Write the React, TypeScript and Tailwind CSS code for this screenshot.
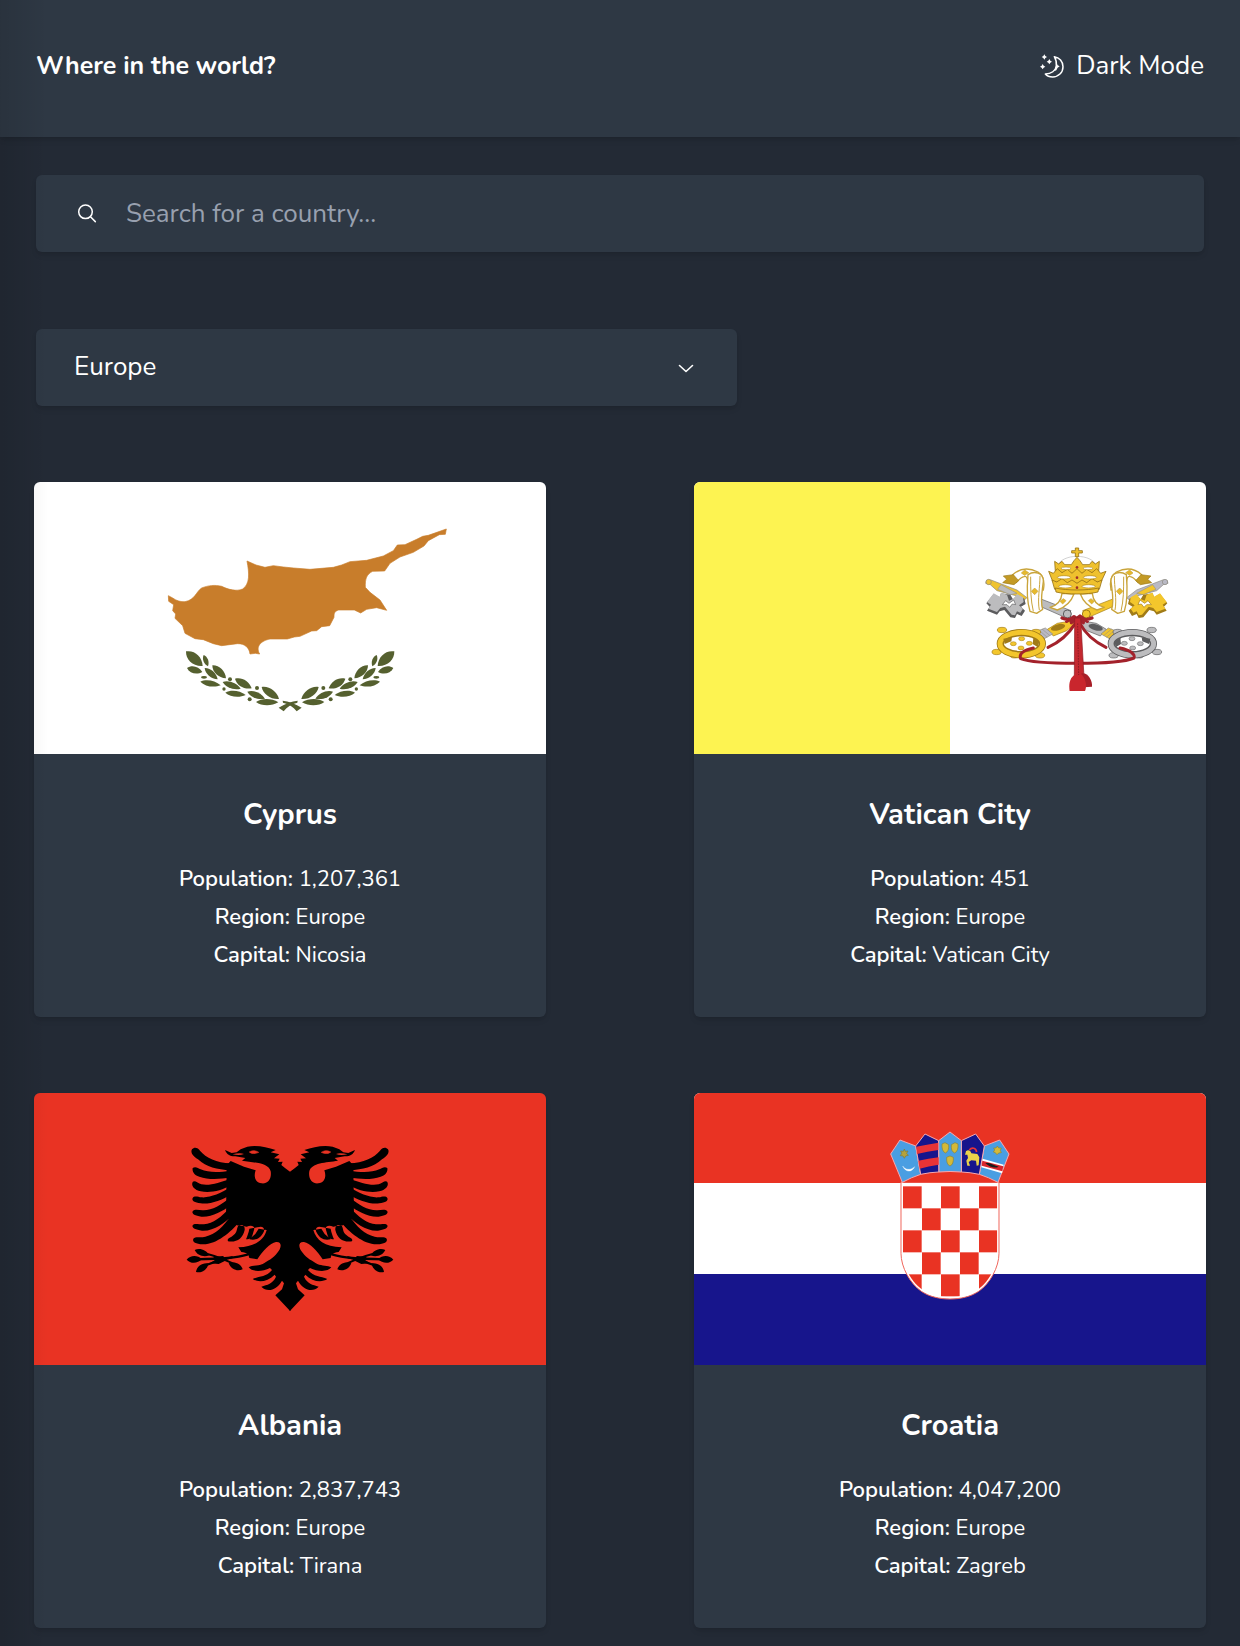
import type { ReactNode } from "react";

type Country = {
  name: string;
  population: string;
  region: string;
  capital: string;
  flag: ReactNode;
};

/* A pointed leaf between two points, w wide in the middle. */
function leaf(x1: number, y1: number, x2: number, y2: number, w: number) {
  const dx = x2 - x1;
  const dy = y2 - y1;
  const len = Math.hypot(dx, dy) || 1;
  const nx = (-dy / len) * w * 0.68;
  const ny = (dx / len) * w * 0.68;
  const ax = x1 + dx * 0.25;
  const ay = y1 + dy * 0.25;
  const bx = x1 + dx * 0.7;
  const by = y1 + dy * 0.7;
  return `M${x1},${y1}C${ax + nx},${ay + ny} ${bx + nx},${by + ny} ${x2},${y2}C${bx - nx},${by - ny} ${ax - nx},${ay - ny} ${x1},${y1}Z`;
}

function Flag({ label, children }: { label: string; children: ReactNode }) {
  return (
    <svg
      role="img"
      aria-label={label}
      viewBox="0 0 512 272"
      preserveAspectRatio="none"
      className="block aspect-[512/272] w-full"
    >
      {children}
    </svg>
  );
}

const oliveLeaves: number[][] = [
  [108, 424, 158, 468, 30],
  [111, 474, 157, 486, 20],
  [161, 435, 174, 469, 14],
  [164, 474, 203, 508, 18],
  [187, 466, 228, 505, 22],
  [151, 515, 212, 526, 17],
  [218, 516, 272, 536, 18],
  [255, 506, 305, 535, 22],
  [226, 548, 287, 555, 17],
  [292, 545, 345, 566, 18],
  [335, 531, 387, 567, 23],
  [318, 576, 385, 577, 18],
];

function OliveBranch() {
  return (
    <>
      {oliveLeaves.map(([a, b, c, d, w], i) => (
        <path key={i} d={leaf(a, b, c, d, w)} />
      ))}
      <ellipse cx="162" cy="502" rx="9" ry="4" />
      <circle cx="240" cy="508" r="6" />
      <circle cx="222" cy="537" r="5" />
      <circle cx="321" cy="534" r="6" />
      <circle cx="299" cy="568" r="6" />
      <path d="M398,572C415,574 438,582 455,593L440,604C430,590 415,582 399,578Z" />
    </>
  );
}

function CyprusFlag() {
  return (
    <Flag label="Flag of Cyprus">
      <rect width="512" height="272" fill="#fff" />
      <g transform="translate(116 28) scale(.33333)">
        <path
          fill="#c87d2b"
          stroke="#c87d2b"
          strokeWidth="2"
          d="M55,257L68,264C80,273 93,276 105,275C135,270 138,245 155,234C175,226 195,224 215,229C235,239 260,245 278,237C300,222 298,190 291,153L318,165L345,172L370,167L400,171L430,174L480,178L550,172L575,165L600,155L650,151L700,138L730,122L742,105L765,104L800,88L818,79L835,76L889,57L886,73L868,74L835,92L822,108L790,127L750,141L720,160L704,183L668,184C650,193 645,206 646,232L660,247L690,270L710,301L680,293L650,298L632,309L613,300L566,300C553,304 552,310 552,322L539,347L515,350L500,362L485,363L450,379L433,381L412,387L360,387C335,392 315,408 329,432L316,430L300,432C298,414 285,400 262,401L215,407L190,401L160,389L135,386L105,370L98,347L75,325L77,312L68,302L71,284L56,274Z"
        />
        <g fill="#55602f">
          <OliveBranch />
          <g transform="translate(841 0) scale(-1 1)">
            <OliveBranch />
          </g>
        </g>
      </g>
    </Flag>
  );
}

/* One key of the crossed pair; wards at the top right, bow at the bottom left. */
function Key({ main, dark, light, accent }: { main: string; dark: string; light: string; accent: string }) {
  return (
    <g strokeLinejoin="round">
      <path d="M338,242L356,262L442,224L436,204Z" fill={main} stroke={dark} strokeWidth="2" />
      <circle cx="349" cy="252" r="12" fill={main} stroke={dark} strokeWidth="3" />
      <path d="M470,203L500,180L578,150L592,152L594,160L580,164L560,182L500,198L478,210Z" fill={accent} stroke="#8d8a80" strokeWidth="2" />
      <path d="M500,190L548,164L558,178L520,194Z" fill={light} stroke="#8d8a80" strokeWidth="1.5" />
      <circle cx="585" cy="156" r="8" fill={accent} stroke="#8d8a80" strokeWidth="2" />
      <path
        d="M478,206L500,196L512,208L520,194L548,190L552,202L570,192L592,220L582,230L590,242L560,254L552,244L538,240L520,262L506,264L500,252L486,258L476,242L488,230L474,222Z"
        fill={dark}
      />
      <path
        d="M482,202L500,192L510,206L524,212L530,194L548,188L552,200L570,190L590,216L578,224L586,236L560,246L550,234L536,230L516,254L506,256L500,244L490,248L482,236L494,226L480,216Z"
        fill={main}
      />
      <path d="M504,224L510,210L524,220L534,212L544,224L530,224L522,232L514,222Z" fill="#fff" stroke={dark} strokeWidth="2" />
      <path d="M308,272L262,280L232,298L250,318L290,302L314,282Z" fill={main} stroke={dark} strokeWidth="2" />
      <ellipse cx="264" cy="292" rx="22" ry="9" fill={dark} transform="rotate(-15 264 292)" />
      <path d="M194,306L226,294L248,312L216,330Z" fill={accent} stroke="#8d8a80" strokeWidth="2" />
      <path d="M206,300L232,322M216,297L240,317" stroke="#8d8a80" strokeWidth="1.5" />
      {[
        [96, 300],
        [80, 366],
        [210, 376],
        [134, 376],
        [198, 306],
      ].map(([x, y]) => (
        <ellipse key={x} cx={x} cy={y} rx="14" ry="8" fill={main} stroke={dark} strokeWidth="2" />
      ))}
      <ellipse cx="154" cy="341" rx="63" ry="33" fill="#fff" stroke={dark} strokeWidth="22" />
      <ellipse cx="154" cy="341" rx="64" ry="34" fill="none" stroke={main} strokeWidth="15" />
      <path d="M100,326L126,322L124,334L104,342ZM190,324L208,334L204,352L188,342Z" fill={dark} />
      {[
        [155, 326],
        [130, 341],
        [153, 354],
        [178, 340],
      ].map(([x, y]) => (
        <ellipse key={x} cx={x} cy={y} rx="9" ry="6" fill={main} stroke={dark} strokeWidth="1.5" />
      ))}
    </g>
  );
}

function Lappet() {
  return (
    <g fill="#fff" stroke="#c9a43a" strokeWidth="4" strokeLinejoin="round">
      <path d="M276,190C274,212 262,226 240,232L262,240C290,230 304,214 312,192Z" />
      <path d="M128,134C150,114 176,112 204,126C222,138 224,160 220,180L174,172C174,150 172,136 162,140C152,142 146,150 138,158Z" />
      <path d="M100,138L130,134L146,152L132,164L98,158L110,148Z" fill="#c39a25" stroke="#9b7a1a" strokeWidth="2" />
      <path d="M174,134C192,122 220,126 220,154C216,190 210,214 218,238L200,250L180,244C172,220 170,180 174,134Z" />
      <path d="M182,140C182,180 182,210 190,244M210,138C210,170 202,210 208,240" fill="none" strokeWidth="3" />
      <path d="M164,120L176,128L164,136L154,129ZM194,174L204,184L194,194L184,184ZM280,206L288,212L278,222L270,214Z" fill="#e6b92c" strokeWidth="2" />
    </g>
  );
}

function VaticanFlag() {
  return (
    <Flag label="Flag of Vatican City">
      <rect width="512" height="272" fill="#fff" />
      <rect width="256" height="272" fill="#fdf351" />
      <g transform="translate(276 48) scale(.33333)">
        <g transform="translate(641 0) scale(-1 1)">
          <Key main="#bcbcbe" dark="#5c5c5e" light="#bcbcbe" accent="#efc330" />
        </g>
        <Key main="#f3c62c" dark="#a17b17" light="#f3c62c" accent="#b9b9c4" />
        <Lappet />
        <g transform="translate(643 0) scale(-1 1)">
          <Lappet />
        </g>
        <g fill="none" stroke="#a3222b" strokeLinecap="round" strokeLinejoin="round">
          <path d="M316,280C296,312 270,336 234,352" strokeWidth="9" />
          <path d="M330,280C346,312 372,334 408,352" strokeWidth="9" />
          <path d="M190,354C160,360 146,372 152,386C180,398 250,400 321,400S464,396 492,384C496,372 480,360 450,354" strokeWidth="9" />
          <path d="M276,264C296,272 340,274 366,264M290,274L312,260L340,278M352,274L330,258L304,278" strokeWidth="10" />
        </g>
        <path d="M314,264H332L342,440H313Z" fill="#c4282f" stroke="#8f1b23" strokeWidth="2" />
        <path d="M323,280L326,436" stroke="#8f1b23" strokeWidth="3" strokeDasharray="5 3" />
        <path d="M334,430C354,426 368,452 366,470L342,472Z" fill="#a81f28" />
        <path d="M312,436L336,434C350,452 350,470 345,483H299C296,466 298,446 312,436Z" fill="#c9262d" />
        <path d="M260,112C272,68 370,68 382,112" fill="#fff" stroke="#bbb" strokeWidth="2" />
        <g fill="#efc12e" stroke="#977216" strokeWidth="2.5" strokeLinejoin="round">
          <path d="M316,54H326V62H337V69H326V80H316V69H305V62H316Z" />
          <path d="M254,94L266,102L276,94L284,104L304,104L312,92L321,82L330,92L338,104L358,104L366,94L376,102L388,94L386,124C350,132 290,132 256,124Z" />
          <path d="M236,124L250,130L262,116L276,128L292,118L306,130L321,116L336,130L350,118L366,128L380,116L392,130L408,124L394,154C350,162 290,162 248,154Z" />
          <path d="M246,150L260,156L276,146L292,158L306,150L321,160L336,150L350,158L366,146L382,156L396,150L388,178C364,188 278,188 254,178Z" />
          <path d="M256,174C290,182 352,182 386,174L384,186C352,194 290,194 258,186Z" />
        </g>
        <g fill="#fff" stroke="#b08b22" strokeWidth="2">
          <ellipse cx="288" cy="115" rx="15" ry="4" />
          <ellipse cx="354" cy="115" rx="15" ry="4" />
          <ellipse cx="282" cy="142" rx="20" ry="5" />
          <ellipse cx="360" cy="142" rx="20" ry="5" />
          <ellipse cx="286" cy="169" rx="20" ry="5" />
          <ellipse cx="356" cy="169" rx="20" ry="5" />
        </g>
        <g fill="#a3302a">
          <circle cx="321" cy="112" r="4" />
          <circle cx="321" cy="143" r="4" />
          <circle cx="321" cy="173" r="4" />
        </g>
      </g>
    </Flag>
  );
}

const eagleFeathers = [
  "M66,58C72,50 84,52 90,62C108,84 140,98 182,100L182,122C140,118 110,112 84,88C70,80 60,68 66,58Z",
  "M68,114C76,108 84,114 92,118C115,128 145,128 182,122L182,142C150,148 115,150 88,140C72,136 66,124 68,114Z",
  "M68,156C74,150 84,160 94,163C120,168 148,158 182,146L182,166C155,182 120,190 92,184C74,180 62,168 68,156Z",
  "M68,204C72,196 84,200 94,202C122,204 150,190 182,172L182,194C155,210 120,224 92,220C74,218 64,212 68,204Z",
  "M68,244C74,236 86,240 98,241C126,242 152,226 182,202L182,226C158,244 126,262 94,260C76,258 64,252 68,244Z",
  "M68,286C72,278 88,284 102,283C130,282 152,262 182,232L190,254C164,278 132,304 96,302C78,300 64,294 68,286Z",
  "M70,326C76,318 90,324 106,320C136,314 160,290 184,256L208,276C182,306 140,344 98,343C78,342 66,336 70,326Z",
];

function EagleHalf() {
  return (
    <g>
      {eagleFeathers.map((d) => (
        <path key={d} d={d} />
      ))}
      <path d="M361,126L345,114L334,105L338,95L324,96L329,86L312,85L328,73L302,67L317,60C290,52 262,44 232,50L212,58L200,67L185,69L165,60C170,74 182,80 196,79L226,84L216,92C252,98 296,98 302,124C306,148 292,162 275,160C256,158 250,140 257,121L222,110L182,93L170,106L168,260L205,288C214,282 226,286 224,300C218,326 200,338 174,334C170,324 182,324 190,316C204,306 198,296 206,286L230,290C244,284 256,288 252,300C246,320 246,328 228,328C232,318 236,308 238,296L262,292C278,286 284,294 282,304C272,326 258,332 238,328L256,312L266,296L290,300C282,330 256,350 205,352L214,366C232,368 236,374 238,384L262,388C278,362 300,340 318,336C338,334 334,356 322,368C310,386 292,392 278,402C264,408 246,406 236,412C246,426 276,426 300,414L306,420C288,442 268,438 248,447C264,458 292,456 314,434L318,440C308,462 292,464 274,470C290,486 318,484 336,452L342,460L336,478L316,496L361,544Z" />
      <g fill="none" stroke="#000" strokeLinecap="round">
        <path d="M232,374C200,384 160,386 76,388" strokeWidth="7" />
        <path d="M206,408C174,394 136,374 88,367M90,412C120,400 150,390 186,382" strokeWidth="6" />
      </g>
      <path d={leaf(50, 389, 96, 387, 20)} />
      <path d={leaf(74, 360, 118, 376, 18)} />
      <path d={leaf(78, 426, 116, 400, 20)} />
      <path d={leaf(218, 418, 176, 400, 20)} />
      <path d="M130,380L160,378L166,392L146,402L120,400L134,391Z" />
      <path d="M238,66C248,60 258,62 266,67C256,72 244,72 238,66Z" fill="#e93323" stroke="#e93323" strokeWidth="2" />
      <path d="M188,73C200,70 212,68 222,72C212,76 202,76 188,73Z" fill="#e93323" />
    </g>
  );
}

function AlbaniaFlag() {
  return (
    <Flag label="Flag of Albania">
      <rect width="512" height="272" fill="#e93323" />
      <g transform="translate(136 37) scale(.33333)">
        <EagleHalf />
        <g transform="translate(720 0) scale(-1 1)">
          <EagleHalf />
        </g>
      </g>
    </Flag>
  );
}

const checks = Array.from({ length: 25 }, (_, i) => ({ col: i % 5, row: Math.floor(i / 5) })).filter(
  ({ col, row }) => (col + row) % 2 === 0,
);

function CroatiaFlag() {
  return (
    <Flag label="Flag of Croatia">
      <rect width="512" height="272" fill="#fff" />
      <rect width="512" height="90" fill="#e93323" />
      <rect y="181" width="512" height="91" fill="#17158c" />
      <g transform="translate(176 27) scale(.33333)">
        <clipPath id="shield">
          <path d="M98,190H382V400C382,440 356,486 322,510C298,526 270,531 240,531S182,526 158,510C124,486 98,440 98,400Z" />
        </clipPath>
        <path
          d="M93,186H387V400C387,442 360,490 326,514C302,530 272,537 240,537S178,530 154,514C120,490 93,442 93,400Z"
          fill="#fff"
          stroke="#f0665c"
          strokeWidth="3"
        />
        <g clipPath="url(#shield)" fill="#e93323">
          {checks.map(({ col, row }) => (
            <rect key={`${col}-${row}`} x={99 + col * 57} y={199 + row * 66} width="56" height="66" />
          ))}
        </g>
        <path d="M95,188C180,146 300,146 386,188Z" fill="#e93323" />
        <g stroke="#f5a9b0" strokeWidth="3" strokeLinejoin="round">
          <path d="M62,102L90,60L137,78L152,163Q124,172 97,187Z" fill="#4a9ee2" />
          <path d="M417,102L389,60L343,78L328,163Q356,172 384,187Z" fill="#4a9ee2" />
          <path d="M137,78L165,42L206,62L207,156Q180,157 152,163Z" fill="#17158c" />
          <path d="M343,78L317,42L274,62L274,156Q300,157 328,163Z" fill="#17158c" />
          <path d="M206,62L240,36L274,62V156Q240,153 207,156Z" fill="#4a9ee2" />
        </g>
        <path d="M139,80Q170,74 205,68V90Q172,94 141,102ZM145,122Q175,116 206,112V134Q175,138 149,146Z" fill="#e93336" />
        <path d="M103,87L106,94L114,93L110,100L115,106L107,108L103,115L99,108L91,107L95,100L92,93L100,94Z" fill="#b5a23c" stroke="#7b7a3c" strokeWidth="2" />
        <path d="M98,138C106,150 122,152 134,140C126,158 106,158 98,138Z" fill="#fff" stroke="#fff" strokeWidth="1" />
        <g fill="#d3b93a" stroke="#8b8535" strokeWidth="2">
          <path d="M216,72L225,68L236,74C237,88 234,96 226,99C218,95 215,86 216,72Z" />
          <path d="M244,74L255,68L264,72C265,86 262,95 254,99C246,96 243,88 244,74Z" />
          <path d="M230,112L240,108L250,112C251,126 248,135 240,138C232,135 229,126 230,112Z" />
          <path d="M382,78L386,84L394,84L391,91L394,98L386,99L381,104L376,98L370,96L374,90L371,84L378,84Z" />
        </g>
        <path d="M288,94C294,88 302,92 304,100L322,102L328,112L326,136L320,137L318,122L304,121L296,126L300,137L292,137L289,122L294,114L292,104L285,104Z" fill="#ead24a" />
        <path d="M298,90C306,80 318,84 320,96" fill="none" stroke="#e93336" strokeWidth="5" />
        <path d="M338,116L401,134L396,160L334,142Z" fill="#fff" />
        <path d="M337,122L400,139L397,154L335,137Z" fill="#d9262c" />
        <path d="M346,130C358,126 366,134 386,140C374,146 360,142 346,130Z" fill="#1b1b1b" />
      </g>
    </Flag>
  );
}

const countries: Country[] = [
  { name: "Cyprus", population: "1,207,361", region: "Europe", capital: "Nicosia", flag: <CyprusFlag /> },
  { name: "Vatican City", population: "451", region: "Europe", capital: "Vatican City", flag: <VaticanFlag /> },
  { name: "Albania", population: "2,837,743", region: "Europe", capital: "Tirana", flag: <AlbaniaFlag /> },
  { name: "Croatia", population: "4,047,200", region: "Europe", capital: "Zagreb", flag: <CroatiaFlag /> },
];

function MoonIcon() {
  return (
    <svg aria-hidden="true" viewBox="0 0 72 72" className="size-6" fill="none" stroke="currentColor">
      <path
        d="M43,8C58,10 69,22 69,38C69,56 55,69 38,69C29,69 21,66 16,60C34,60 47,50 49,36C50,26 48,16 43,8Z"
        strokeWidth="4.5"
        strokeLinejoin="round"
      />
      <path d="M50,28L53,34L59,37L53,41L49,49L42,52L46,42Z" fill="currentColor" stroke="none" />
      <g fill="currentColor" stroke="none">
        <path d="M13,1L16,6L21,9L16,12L13,17L10,12L5,9L10,6Z" />
        <path d="M28,15L31,20L36,23L31,26L28,31L25,26L20,23L25,20Z" />
        <path d="M8,30L11,35L16,38L11,41L8,46L5,41L0,38L5,35Z" />
      </g>
    </svg>
  );
}

function CountryCard({ name, population, region, capital, flag }: Country) {
  return (
    <article className="overflow-hidden rounded-md bg-[#2e3844] shadow-md">
      {flag}
      <div className="px-6 pt-[41px] pb-[43px] text-center">
        <h2 className="text-[29px] leading-10 font-bold">{name}</h2>
        <div className="mt-[25px] text-[22px] leading-[38px]">
          <p>
            <span className="font-semibold">Population:</span> {population}
          </p>
          <p>
            <span className="font-semibold">Region:</span> {region}
          </p>
          <p>
            <span className="font-semibold">Capital:</span> {capital}
          </p>
        </div>
      </div>
    </article>
  );
}

export default function App() {
  return (
    <div className="relative min-h-screen bg-[#232a35] font-[Nunito,Lato,sans-serif] text-white">
      <header className="flex items-center justify-between bg-[#2e3844] px-9 pt-[46px] pb-[51px] shadow-md">
        <h1 className="text-[25px] leading-10 font-bold">Where in the world?</h1>
        <button type="button" className="flex items-center gap-3 text-[26px] leading-10">
          <MoonIcon />
          Dark Mode
        </button>
      </header>

      <main>
        <div className="px-9 pt-[38px]">
          <div className="flex h-[77px] items-center gap-[29px] rounded-md bg-[#2e3844] px-[41px] shadow-md">
            <svg aria-hidden="true" viewBox="0 0 20 20" className="size-5 shrink-0" fill="none" stroke="currentColor" strokeWidth="1.5" strokeLinecap="round">
              <circle cx="8.5" cy="7.8" r="6.8" />
              <path d="M13.5 12.8L18.3 17.6" />
            </svg>
            <input
              type="text"
              aria-label="Search for a country"
              placeholder="Search for a country..."
              className="h-full min-w-0 flex-1 bg-transparent text-[26px] outline-none placeholder:text-[#98a0af]"
            />
          </div>

          <div className="relative mt-[77px] w-3/5">
            <select
              aria-label="Region"
              defaultValue="Europe"
              className="h-[77px] w-full appearance-none rounded-md bg-[#2e3844] px-[38px] pb-0.5 text-[26px] text-white shadow-md outline-none"
            >
              <option>Africa</option>
              <option>Americas</option>
              <option>Asia</option>
              <option>Europe</option>
              <option>Oceania</option>
            </select>
            <svg
              aria-hidden="true"
              viewBox="0 0 16 16"
              className="pointer-events-none absolute top-8 right-[43px] size-4"
              fill="none"
              stroke="currentColor"
              strokeWidth="1.6"
              strokeLinecap="round"
              strokeLinejoin="round"
            >
              <path d="M1.5 4.5L8 10.5L14.5 4.5" />
            </svg>
          </div>
        </div>

        <section aria-label="Countries" className="grid grid-cols-2 gap-x-[148px] gap-y-[76px] px-[34px] pt-[76px] pb-[18px]">
          {countries.map((country) => (
            <CountryCard key={country.name} {...country} />
          ))}
        </section>
      </main>
      <div className="pointer-events-none absolute inset-y-0 left-0 w-12 bg-linear-to-r from-black/10 to-transparent" />
    </div>
  );
}
